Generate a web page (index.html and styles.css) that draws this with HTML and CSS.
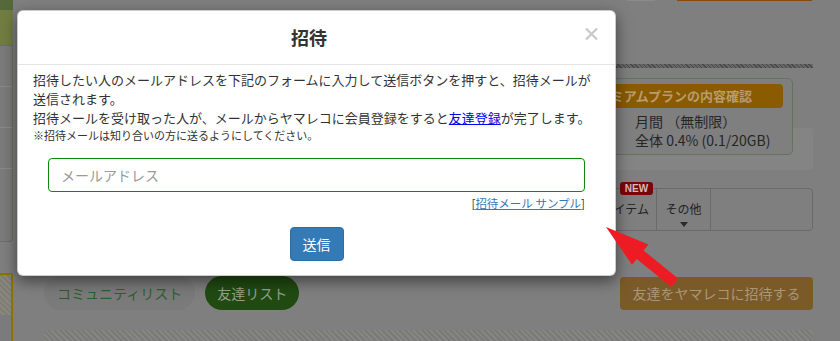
FILE: index.html
```html
<!DOCTYPE html>
<html lang="ja">
<head>
<meta charset="utf-8">
<title>招待</title>
<link rel="stylesheet" href="styles.css">
</head>
<body>
<div class="page">
  <aside class="side">
    <div class="side-top"></div>
    <div class="side-menu">
      <div class="side-row"></div>
      <div class="side-row"></div>
      <div class="side-row"></div>
      <div class="side-row last"></div>
    </div>
    <div class="side-box"><div class="side-hatch"></div></div>
  </aside>
  <main class="main">
    <div class="upper">
      <div class="leftarea"></div>
      <div class="rightcol">
        <div class="topline"><span class="stub-gray"></span><span class="stub-orange"></span></div>
        <div class="hatch-line"></div>
        <div class="plan-area">
          <div class="plan-bg"></div>
          <div class="plan-box">
            <div class="plan-btn">プレミアムプランの内容確認</div>
            <div class="plan-text">月間 （無制限）<br>全体 0.4% (0.1/20GB)</div>
          </div>
        </div>
        <div class="tabs">
          <div class="tab tab-fill">日記</div>
          <div class="tab tab-item"><span class="badge-new">NEW</span>アイテム</div>
          <div class="tab tab-more">その他<span class="caret"></span></div>
          <div class="tab tab-empty"></div>
        </div>
      </div>
    </div>
    <div class="lower">
      <span class="pill pill-gray">コミュニティリスト</span>
      <span class="pill pill-green">友達リスト</span>
      <span class="invite-btn">友達をヤマレコに招待する</span>
    </div>
    <div class="bottom-hatch"></div>
  </main>
</div>

<div class="modal">
  <div class="modal-header">
    <h4 class="modal-title">招待</h4>
    <span class="close"><svg width="13" height="12" viewBox="0 0 13 12"><path d="M1 0.5 L12 11.5 M12 0.5 L1 11.5" stroke="#c9c9c9" stroke-width="2.2" fill="none"/></svg></span>
  </div>
  <div class="modal-body">
    <p class="lead-text">招待したい人のメールアドレスを下記のフォームに入力して送信ボタンを押すと、招待メールが<br>送信されます。<br>招待メールを受け取った人が、メールからヤマレコに会員登録をすると<a class="link-blue" href="#">友達登録</a>が完了します。</p>
    <p class="note">※招待メールは知り合いの方に送るようにしてください。</p>
    <input class="email" type="text" placeholder="メールアドレス">
    <div class="sample"><span>[</span><a href="#">招待メール サンプル</a><span>]</span></div>
    <div class="actions"><span class="btn-send">送信</span></div>
  </div>
</div>

<svg class="arrow" width="840" height="341" viewBox="0 0 840 341">
  <polygon points="606,227 648.4,244.6 643.6,250.5 678.1,278.5 671.3,286.9 636.8,258.9 632,264.8" fill="#ed1c24"/>
</svg>
</body>
</html>
```

FILE: styles.css
```css
* { box-sizing: border-box; }

body {
  margin: 0;
  width: 840px;
  height: 341px;
  overflow: hidden;
  position: relative;
  background: #7f7f7f;
  font-family: "Noto Sans CJK JP", "Noto Sans", sans-serif;
  color: #333;
}

/* ---------- dimmed background page ---------- */
.page {
  display: flex;
  height: 341px;
}

.side {
  width: 13px;
  display: flex;
  flex-direction: column;
}

.side-top {
  height: 46px;
  background: #727d42;
  border-top: 10px solid #56693a;
  border-bottom: 1px solid #6c6c6c;
}

.side-menu {
  height: 196px;
  border-right: 1px solid #6a6f66;
  border-bottom: 1px solid #6a6f66;
  border-bottom-right-radius: 4px;
  background: #7b7b7b;
}

.side-row {
  height: 41px;
  border-bottom: 1px solid #8a8a8a;
}

.side-row.last { border-bottom: none; }

.side-box {
  margin-top: 31px;
  flex: 1;
  border-top: 2px solid #8a7400;
  border-right: 2px solid #8a7400;
  border-top-right-radius: 3px;
  background: #7b7b7b;
}

.side-hatch {
  height: 40px;
  background: repeating-linear-gradient(45deg, #807d74 0 2px, #8b877d 2px 4px);
}

.main {
  margin-left: 31px;
  width: 769px;
}

.upper {
  display: grid;
  grid-template-columns: 1fr 383px;
  height: 276px;
}

.rightcol {
  display: flex;
  flex-direction: column;
}

.topline {
  display: flex;
  gap: 22px;
  height: 1px;
  padding-left: 197px;
}

.stub-gray { width: 28px; background: #8a8a8a; }
.stub-orange { width: 135px; background: #8a4a0e; }

.hatch-line {
  margin-top: 63px;
  height: 4px;
  background: repeating-linear-gradient(45deg, #484848 0 1px, #666 1px 3px);
}

.plan-area {
  display: grid;
  margin-top: 10px;
}

.plan-bg,
.plan-box { grid-area: 1 / 1; }

.plan-bg {
  margin-top: 50px;
  height: 42px;
  background: #848484;
  border-radius: 3px;
}

.plan-box {
  justify-self: end;
  margin-right: 20px;
  width: 264px;
  height: 77px;
  border: 1px solid #65735b;
  border-radius: 5px;
  background: #7f7f7f;
  padding: 5px 9px;
}

.plan-btn {
  height: 24px;
  line-height: 24px;
  background: #8a5b00;
  border-radius: 4px;
  color: #b99c6c;
  font-size: 13px;
  font-weight: bold;
  text-align: right;
  padding-right: 31px;
  white-space: nowrap;
  overflow: hidden;
}

.plan-text {
  margin-top: 4px;
  padding-left: 96px;
  font-size: 14px;
  line-height: 19px;
  color: #262626;
  white-space: nowrap;
}

.tabs {
  margin-top: 18px;
  height: 43px;
  display: flex;
  border: 1px solid #6a6a6a;
  border-radius: 4px;
}

.tab {
  position: relative;
  display: flex;
  flex-direction: column;
  align-items: center;
  padding-top: 12px;
  font-size: 12px;
  line-height: 16px;
  color: #222;
  border-right: 1px solid #6a6a6a;
  white-space: nowrap;
}

.tab-fill { flex: 1; }
.tab-item { width: 62px; }
.tab-more { width: 54px; }
.tab-empty { width: 101px; border-right: none; }

.caret {
  margin-top: 5px;
  width: 0;
  height: 0;
  border-top: 5px solid #2a2a2a;
  border-left: 4px solid transparent;
  border-right: 4px solid transparent;
}

.badge-new {
  position: absolute;
  top: -7px;
  left: 25px;
  width: 33px;
  height: 13px;
  line-height: 13px;
  border-radius: 3px;
  background: #7a0707;
  color: #d9b9b9;
  font-family: "Liberation Sans", Arial, sans-serif;
  font-size: 10px;
  font-weight: bold;
  text-align: center;
}

.lower {
  display: flex;
  align-items: center;
  gap: 10px;
  height: 34px;
}

.pill {
  height: 34px;
  line-height: 34px;
  border-radius: 17px;
  font-size: 14px;
  white-space: nowrap;
}

.pill-gray {
  padding: 0 13px;
  background: #7a7a7a;
  color: #2d5f2d;
}

.pill-green {
  padding: 0 12px;
  background: #214a12;
  color: #9aa08c;
}

.invite-btn {
  margin-left: auto;
  width: 193px;
  height: 33px;
  line-height: 33px;
  text-align: center;
  border-radius: 4px;
  background: #7a5a29;
  color: #a8977a;
  font-size: 14px;
}

.bottom-hatch {
  margin-top: 20px;
  height: 14px;
  border-radius: 4px 4px 0 0;
  background: repeating-linear-gradient(45deg, #7a7a78 0 2px, #858581 2px 4px);
}

/* ---------- modal ---------- */
.modal {
  position: absolute;
  top: 10px;
  left: 17px;
  width: 599px;
  background: #fff;
  border: 1px solid rgba(0, 0, 0, 0.2);
  border-radius: 6px;
  box-shadow: 0 5px 15px rgba(0, 0, 0, 0.5);
}

.modal-header {
  display: flex;
  align-items: flex-start;
  padding: 14px 15px;
  border-bottom: 1px solid #e5e5e5;
}

.modal-title {
  flex: 1;
  margin: 0;
  font-size: 18px;
  line-height: 25px;
  font-weight: bold;
  color: #333;
  text-align: center;
}

.close {
  display: block;
  width: 13px;
  height: 12px;
  margin-top: 3px;
  margin-right: 2px;
}

.close svg { display: block; }

.modal-body {
  padding: 5px 15px 14px;
}

.lead-text {
  margin: 0;
  font-size: 13px;
  line-height: 19px;
  color: #333;
}

.link-blue {
  color: #0000ee;
  text-decoration: underline;
}

.note {
  margin: 0;
  font-size: 11px;
  line-height: 16px;
  color: #333;
}

.email {
  display: block;
  margin: 15px 15px 0;
  width: calc(100% - 30px);
  height: 34px;
  padding: 6px 12px;
  border: 1px solid #0b880b;
  border-radius: 4px;
  font-family: "Noto Sans CJK JP", "Noto Sans", sans-serif;
  font-size: 14px;
  color: #555;
  outline: none;
}

.email::placeholder { color: #9a9a9a; }

.sample {
  margin: 3px 15px 0;
  display: flex;
  justify-content: flex-end;
  font-size: 11.5px;
  line-height: 16px;
  color: #333;
}

.sample a {
  color: #337ab7;
  text-decoration: underline;
}

.actions {
  margin-top: 16px;
  display: flex;
  justify-content: center;
}

.btn-send {
  display: inline-block;
  padding: 6px 12px;
  line-height: 20px;
  font-size: 14px;
  color: #fff;
  background: #337ab7;
  border: 1px solid #2e6da4;
  border-radius: 4px;
}

.arrow {
  position: absolute;
  top: 0;
  left: 0;
  pointer-events: none;
}
```
